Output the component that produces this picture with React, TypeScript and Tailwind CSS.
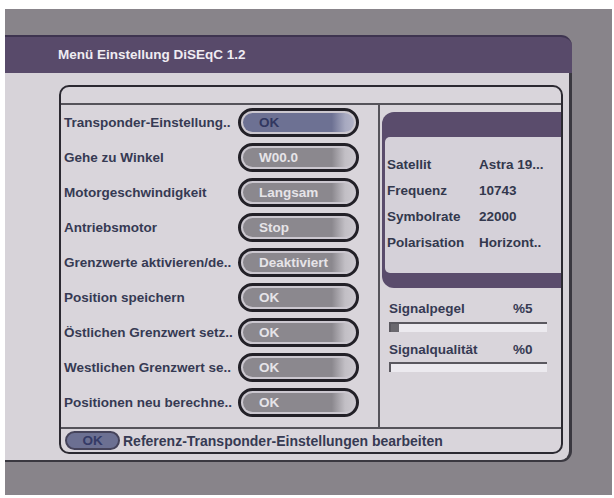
import React from "react";

const rows: { label: string; value: string; focus?: boolean }[] = [
  { label: "Transponder-Einstellung..", value: "OK", focus: true },
  { label: "Gehe zu Winkel", value: "W00.0" },
  { label: "Motorgeschwindigkeit", value: "Langsam" },
  { label: "Antriebsmotor", value: "Stop" },
  { label: "Grenzwerte aktivieren/de..", value: "Deaktiviert" },
  { label: "Position speichern", value: "OK" },
  { label: "Östlichen Grenzwert setz..", value: "OK" },
  { label: "Westlichen Grenzwert se..", value: "OK" },
  { label: "Positionen neu berechne..", value: "OK" },
];

const info: [string, string][] = [
  ["Satellit", "Astra 19..."],
  ["Frequenz", "10743"],
  ["Symbolrate", "22000"],
  ["Polarisation", "Horizont.."],
];

function Pill({ value, focus }: { value: string; focus?: boolean }) {
  return (
    <div className="w-[121px] h-[29px] rounded-full border-[3px] border-[#222027] bg-[#cbc7cf] p-[2px]">
      <div
        className={
          focus
            ? "h-full rounded-full bg-[linear-gradient(to_right,#6d7193_0%,#6d7193_80%,#a7a9c0_92%,#b3b4c8_100%)] flex items-center pl-[16px] text-[#313760]"
            : "h-full rounded-full bg-[linear-gradient(to_right,#8b888e_0%,#8b888e_80%,#c2bfc5_92%,#cac7cd_100%)] flex items-center pl-[16px] text-[#e6e4e8]"
        }
      >
        {value}
      </div>
    </div>
  );
}

function Bar({ filled }: { filled: boolean }) {
  return (
    <div className="w-[158px] h-[10px] bg-[#eceaef] border-t-2 border-l-2 border-[#5a585f] flex">
      {filled ? <div className="w-[8px] h-full bg-[#6a686e]" /> : null}
    </div>
  );
}

export default function App() {
  return (
    <div className="min-h-screen bg-white pt-[9px] pl-[5px] font-['Liberation_Sans',Arial,sans-serif] font-bold text-[13.5px] leading-none">
      <div className="w-[607px] h-[486px] bg-[#88848a] pt-[26px]">
        <div className="w-[567px] h-[38px] rounded-tr-[11px] bg-[#584a6a] border-t-2 border-[#3e3450] flex items-center pl-[53px] text-[#efecf2]">
          Menü Einstellung DiSEqC 1.2
        </div>
        <div className="w-[567px] h-[389px] bg-[#d7d3d9] rounded-br-[11px] border-r-[3px] border-b-[2px] border-[#3a3840] pl-[54px] pt-[12px]">
          <div className="w-[504px] h-[369px] rounded-[10px] border-2 border-[#2b2931] bg-[#d9d5db] flex flex-col overflow-hidden">
            <div className="h-[18px] border-b-2 border-[#55535a] shrink-0" />
            <div className="h-[322px] flex shrink-0">
              <div className="w-[319px] border-r-2 border-[#55535a] flex flex-col">
                {rows.map((r) => (
                  <div key={r.label} className="h-[35px] flex items-center">
                    <div className="w-[177px] pl-[3px] text-[#363a53] whitespace-nowrap">{r.label}</div>
                    <Pill value={r.value} focus={r.focus} />
                  </div>
                ))}
              </div>
              <div className="flex-1 flex flex-col">
                <div className="ml-[2px] mt-[7px] h-[176px] rounded-l-[12px] bg-[#5a4c6c] pl-[3px] flex flex-col">
                  <div className="h-[25px] shrink-0" />
                  <div className="flex-1 bg-[#d5d1d9] rounded-l-[5px] pt-[21px] pl-[2px] text-[#33384d]">
                    {info.map(([k, v]) => (
                      <div key={k} className="h-[26px] flex items-start">
                        <div className="w-[92px]">{k}</div>
                        <div>{v}</div>
                      </div>
                    ))}
                  </div>
                  <div className="h-[15px] shrink-0" />
                </div>
                <div className="pl-[9px] mt-[13px] text-[#363a53]">
                  <div className="h-[16px] flex items-center">
                    <div className="w-[124px]">Signalpegel</div>
                    <div>%5</div>
                  </div>
                  <div className="mt-[5px]">
                    <Bar filled />
                  </div>
                  <div className="h-[16px] flex items-center mt-[10px]">
                    <div className="w-[124px]">Signalqualität</div>
                    <div>%0</div>
                  </div>
                  <div className="mt-[4px]">
                    <Bar filled={false} />
                  </div>
                </div>
              </div>
            </div>
            <div className="flex-1 border-t-2 border-[#55535a] flex items-center pl-[4px] gap-[3px] text-[#363a53] text-[14px]">
              <div className="w-[55px] h-[19px] rounded-full bg-[#6c7092] border-2 border-[#45435a] flex items-center justify-center text-[#343a66] text-[13.5px]">
                OK
              </div>
              <div>Referenz-Transponder-Einstellungen bearbeiten</div>
            </div>
          </div>
        </div>
      </div>
    </div>
  );
}
